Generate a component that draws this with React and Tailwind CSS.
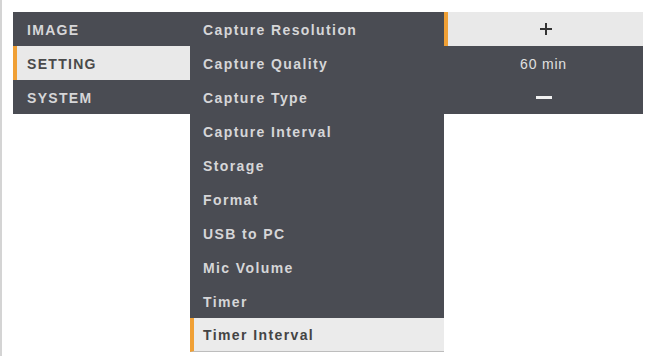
export default function App() {
  const left = ["IMAGE", "SETTING", "SYSTEM"];
  const mid = [
    "Capture Resolution",
    "Capture Quality",
    "Capture Type",
    "Capture Interval",
    "Storage",
    "Format",
    "USB to PC",
    "Mic Volume",
    "Timer",
    "Timer Interval",
  ];
  return (
    <div
      className="w-[648px] h-[356px] bg-white border-l-2 border-[#d4d4d4] overflow-hidden"
      style={{ fontFamily: '"Liberation Sans", Arial, sans-serif' }}
    >
      <div className="flex items-start pt-[12px] pl-[11px]">
        <div className="w-[177px] bg-[#4a4c53] flex flex-col">
          {left.map((t, i) =>
            i === 1 ? (
              <div key={t} className="h-[34px] flex items-center pt-[2px] bg-[#e9e9e9] border-l-4 border-[#f0a035] pl-[10px] text-[14px] font-bold tracking-[1.3px] text-[#4a4a4a]">
                {t}
              </div>
            ) : (
              <div key={t} className="h-[34px] flex items-center pt-[2px] pl-[14px] text-[14px] font-bold tracking-[1.3px] text-[#d6d6d8]">
                {t}
              </div>
            )
          )}
        </div>
        <div className="w-[254px] bg-[#4a4c53] flex flex-col">
          {mid.map((t, i) =>
            i === 9 ? (
              <div key={t} className="h-[34px] flex items-center pt-[2px] bg-[#ebebeb] border-l-4 border-[#f0a035] border-b border-b-[#bdbdbd] pl-[9px] text-[14px] font-bold tracking-[1.4px] text-[#444]">
                {t}
              </div>
            ) : (
              <div key={t} className="h-[34px] flex items-center pt-[2px] pl-[13px] text-[14px] font-bold tracking-[1.4px] text-[#d6d6d8]">
                {t}
              </div>
            )
          )}
        </div>
        <div className="w-[199px] bg-[#4a4c53] flex flex-col">
          <div className="h-[34px] flex items-center justify-center bg-[#e9e9e9] border-l-4 border-[#f0a035] text-[#333]">
            <svg width="14" height="14" viewBox="0 0 14 14">
              <path d="M7 1v12M1 7h12" stroke="#333" strokeWidth="2" />
            </svg>
          </div>
          <div className="h-[34px] flex items-center justify-center pt-[2px] text-[14px] tracking-[0.8px] text-[#e0e0e0]">
            60 min
          </div>
          <div className="h-[34px] flex items-center justify-center">
            <div className="w-[16px] h-[3px] bg-[#f0f0f0]" />
          </div>
        </div>
      </div>
    </div>
  );
}
